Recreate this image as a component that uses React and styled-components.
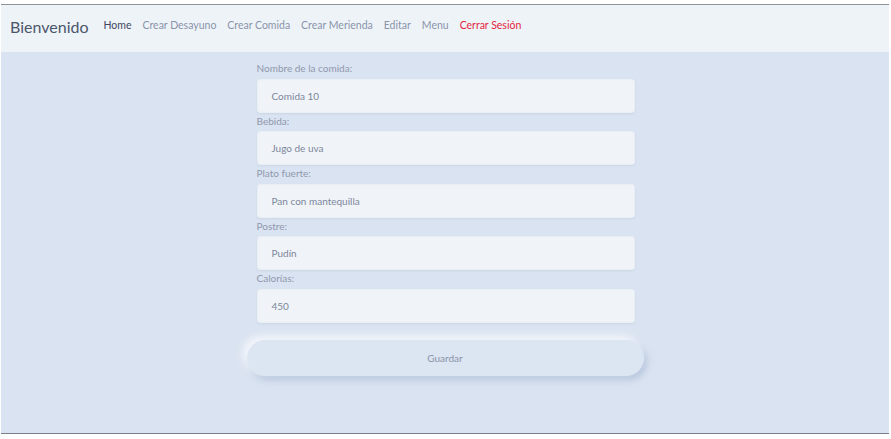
import React from "react";
import styled, { createGlobalStyle } from "styled-components";

const GlobalStyle = createGlobalStyle`
  html, body {
    margin: 0;
    padding: 0;
    background: #ffffff;
  }
  body {
    font-family: "Lato", "Noto Sans", sans-serif;
  }
`;

const Frame = styled.div`
  margin: 4px 2px 0 1px;
  height: 430px;
  display: flex;
  flex-direction: column;
  border-top: 1px solid #8e939c;
  border-bottom: 1px solid #7b808a;
  background: #dae3f1;
  box-sizing: border-box;
`;

const NavBar = styled.nav`
  height: 47px;
  flex-shrink: 0;
  display: flex;
  align-items: center;
  padding: 0 9px 4px;
  box-sizing: border-box;
  background: #eef3f8;
  gap: 15px;
`;

const Brand = styled.span`
  font-size: 16px;
  color: #4b566b;
`;

const Links = styled.div`
  display: flex;
  align-items: center;
  gap: 11px;
  margin-top: -3px;
`;

const NavLink = styled.a`
  font-size: 10.5px;
  color: ${(p) => (p.$danger ? "#e3263c" : p.$active ? "#3d475d" : "#8a94aa")};
  text-decoration: none;
`;

const Main = styled.main`
  flex: 1;
  display: flex;
  justify-content: center;
  padding-top: 9px;
`;

const Form = styled.form`
  width: 397px;
  display: flex;
  flex-direction: column;
`;

const Field = styled.div`
  display: flex;
  flex-direction: column;
  padding: 0 9px 0 10px;
`;

const Label = styled.label`
  font-size: 10px;
  color: #8f98ad;
  height: 17.5px;
  line-height: 15px;
`;

const Input = styled.div`
  height: 34px;
  display: flex;
  align-items: center;
  padding-left: 15px;
  margin-bottom: 1px;
  background: #f0f4f9;
  border-radius: 3px;
  font-size: 10px;
  color: #7d869a;
  box-shadow: inset 0 0 2px rgba(170, 185, 210, 0.35),
    0 1px 2px rgba(175, 190, 215, 0.35);
`;

const SaveButton = styled.button`
  margin-top: 16px;
  height: 36px;
  border: none;
  border-radius: 18px;
  background: #dce5f2;
  font-family: inherit;
  font-size: 10px;
  color: #8a93a8;
  box-shadow: -4px -4px 8px rgba(255, 255, 255, 0.75),
    3px 4px 7px rgba(160, 178, 208, 0.6);
`;

const fields = [
  { label: "Nombre de la comida:", value: "Comida 10" },
  { label: "Bebida:", value: "Jugo de uva" },
  { label: "Plato fuerte:", value: "Pan con mantequilla" },
  { label: "Postre:", value: "Pudín" },
  { label: "Calorías:", value: "450" },
];

const App = () => {
  return (
    <>
      <GlobalStyle />
      <Frame>
        <NavBar>
          <Brand>Bienvenido</Brand>
          <Links>
            <NavLink $active>Home</NavLink>
            <NavLink>Crear Desayuno</NavLink>
            <NavLink>Crear Comida</NavLink>
            <NavLink>Crear Merienda</NavLink>
            <NavLink>Editar</NavLink>
            <NavLink>Menu</NavLink>
            <NavLink $danger>Cerrar Sesión</NavLink>
          </Links>
        </NavBar>
        <Main>
          <Form onSubmit={(e) => e.preventDefault()}>
            {fields.map((f) => (
              <Field key={f.label}>
                <Label>{f.label}</Label>
                <Input>{f.value}</Input>
              </Field>
            ))}
            <SaveButton type="submit">Guardar</SaveButton>
          </Form>
        </Main>
      </Frame>
    </>
  );
};

export default App;
